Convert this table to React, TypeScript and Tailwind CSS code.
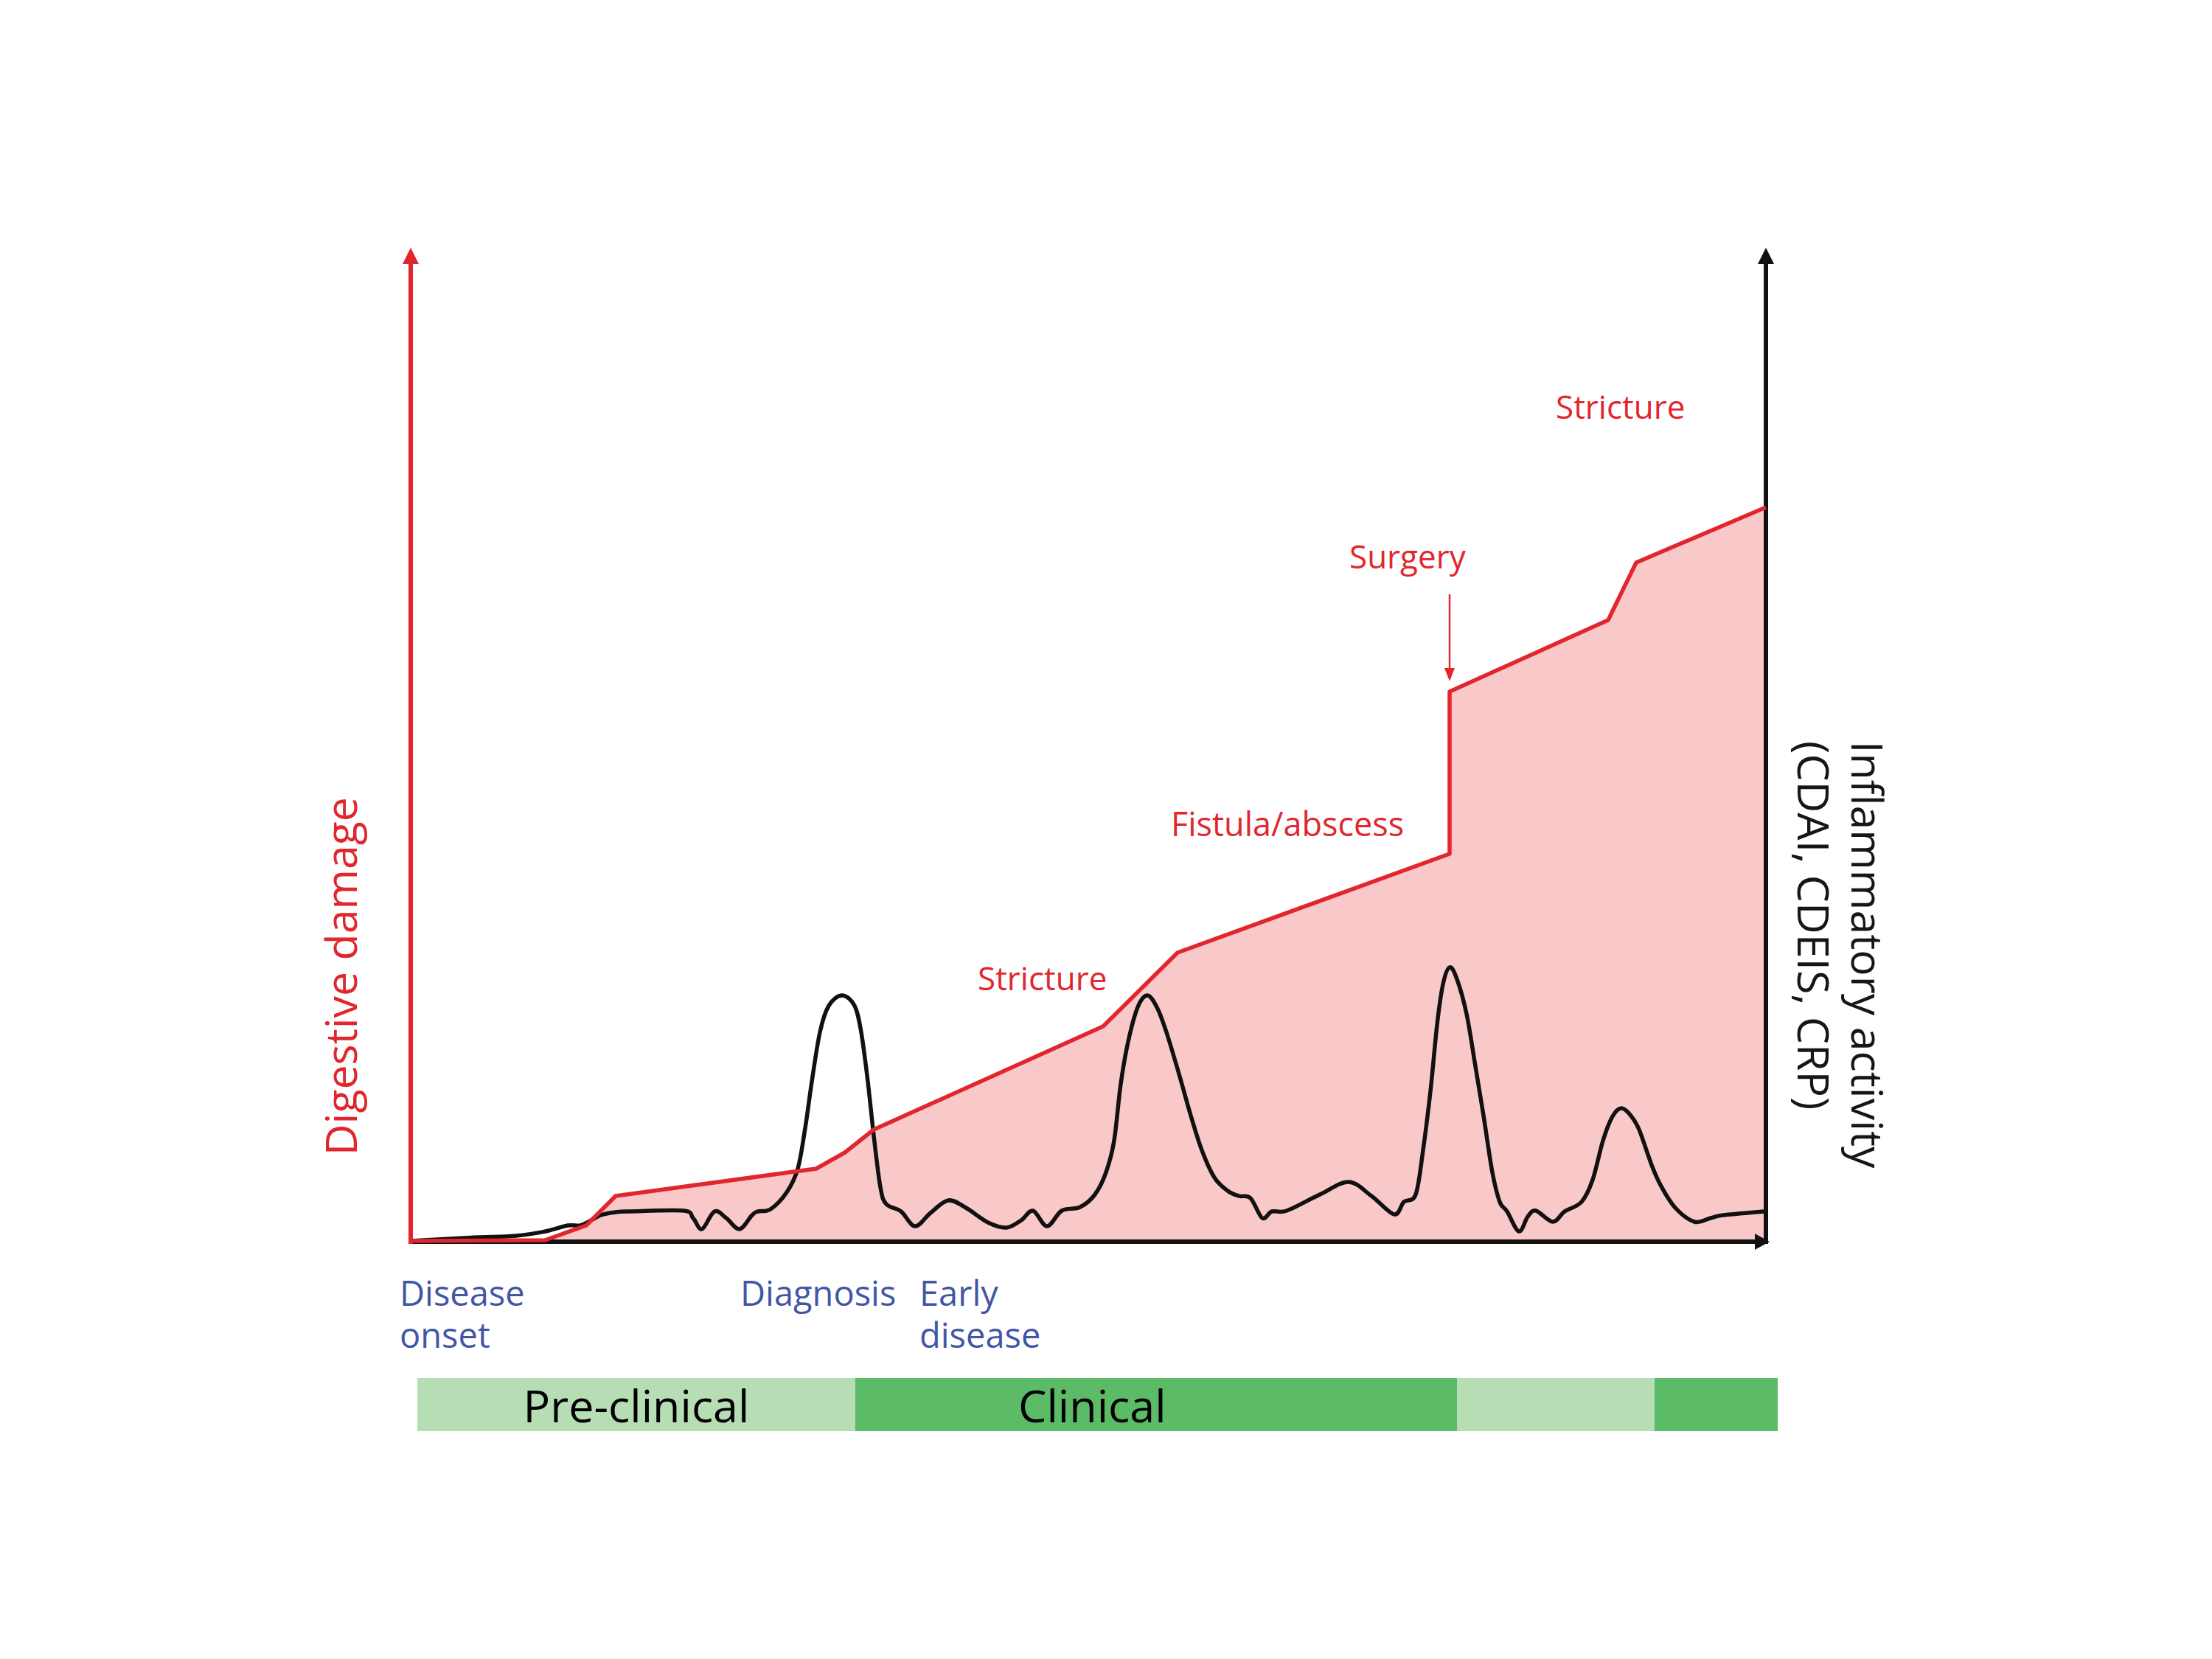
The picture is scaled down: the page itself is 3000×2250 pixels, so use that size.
const damage: [number, number][] = [
  [557, 1683],
  [739, 1682],
  [795, 1662],
  [835, 1622],
  [1107, 1585],
  [1146, 1563],
  [1185, 1532],
  [1496, 1392],
  [1597, 1292],
  [1966, 1158],
  [1966, 938],
  [2181, 841],
  [2219, 763],
  [2395, 688],
];

const activity: [number, number][] = [
  [557, 1683], [630, 1679], [700, 1676], [740, 1670], [770, 1662], [787, 1662],
  [800, 1656], [815, 1648], [835, 1644], [854, 1643], [927, 1642], [940, 1652],
  [952, 1667], [969, 1643], [985, 1652], [1003, 1667], [1020, 1648], [1028, 1643],
  [1045, 1640], [1067, 1617], [1082, 1585], [1092, 1530], [1101, 1467], [1112, 1400],
  [1124, 1364], [1142, 1350], [1159, 1364], [1168, 1400], [1177, 1467], [1185, 1540],
  [1194, 1610], [1202, 1633], [1222, 1643],
  [1241, 1663], [1262, 1645], [1286, 1628], [1310, 1638], [1340, 1658], [1365, 1665],
  [1385, 1655], [1401, 1642], [1420, 1663], [1440, 1642], [1465, 1637], [1485, 1620],
  [1500, 1590], [1511, 1547], [1520, 1470], [1530, 1413], [1543, 1366], [1556, 1350],
  [1569, 1366], [1582, 1400], [1600, 1460], [1615, 1513], [1630, 1560], [1647, 1597],
  [1665, 1615], [1680, 1622], [1696, 1625], [1712, 1652], [1725, 1643], [1745, 1642],
  [1790, 1620], [1829, 1603], [1860, 1622], [1891, 1647], [1904, 1630], [1920, 1620],
  [1930, 1560], [1940, 1480], [1949, 1390], [1957, 1335], [1966, 1312], [1976, 1328],
  [1989, 1375], [2000, 1440], [2012, 1513], [2024, 1590], [2034, 1630], [2044, 1643],
  [2060, 1670], [2072, 1650], [2083, 1642], [2106, 1657], [2122, 1643], [2145, 1630],
  [2160, 1600], [2174, 1547], [2187, 1514], [2199, 1503], [2211, 1512], [2223, 1532],
  [2240, 1580], [2252, 1607], [2272, 1638], [2298, 1657], [2320, 1652], [2337, 1648],
  [2392, 1643],
];

// catmull-rom through the points, as cubic beziers
function smooth(pts: [number, number][]) {
  let d = `M${pts[0][0]} ${pts[0][1]}`;
  for (let i = 0; i < pts.length - 1; i++) {
    const p0 = pts[i - 1] ?? pts[i];
    const p1 = pts[i];
    const p2 = pts[i + 1];
    const p3 = pts[i + 2] ?? p2;
    const c1x = p1[0] + (p2[0] - p0[0]) / 6;
    const c1y = p1[1] + (p2[1] - p0[1]) / 6;
    const c2x = p2[0] - (p3[0] - p1[0]) / 6;
    const c2y = p2[1] - (p3[1] - p1[1]) / 6;
    d += ` C${c1x.toFixed(1)} ${c1y.toFixed(1)} ${c2x.toFixed(1)} ${c2y.toFixed(1)} ${p2[0]} ${p2[1]}`;
  }
  return d;
}

const RED = "#e1262d";

const Chart = () => {
  const line = damage.map((p) => p.join(",")).join(" ");
  const fill = `${line} 2395,1684 740,1684`;

  return (
    <svg width={1920} height={1380} viewBox="500 320 1920 1380" className="shrink-0">
      <polygon points={fill} fill="#f9c9ca" />

      {/* axes */}
      <line x1={557} y1={1684} x2={2384} y2={1684} stroke="#111" strokeWidth={6} />
      <polygon points="2400,1684 2380,1673 2380,1695" fill="#111" />
      <line x1={2395} y1={1687} x2={2395} y2={352} stroke="#111" strokeWidth={6} />
      <polygon points="2395,336 2384,358 2406,358" fill="#111" />

      <path d={smooth(activity)} fill="none" stroke="#111" strokeWidth={5.5} strokeLinejoin="round" />

      <polyline points={line} fill="none" stroke={RED} strokeWidth={5.5} strokeLinejoin="round" />
      <line x1={557} y1={1687} x2={557} y2={352} stroke={RED} strokeWidth={6} />
      <polygon points="557,336 546,358 568,358" fill={RED} />

      {/* surgery marker */}
      <line x1={1966} y1={806} x2={1966} y2={912} stroke={RED} strokeWidth={2.5} />
      <polygon points="1966,924 1959,906 1973,906" fill={RED} />

      <g fill={RED} fontSize={44}>
        <text x={2110} y={568}>Stricture</text>
        <text x={1830} y={771}>Surgery</text>
        <text x={1588} y={1134} fontSize={45}>Fistula/abscess</text>
        <text x={1326} y={1343}>Stricture</text>
      </g>
    </svg>
  );
};

export default function App() {
  return (
    <div className="w-[3000px] h-[2250px] bg-white pt-[320px] font-['Open_Sans',sans-serif]">
      <div className="flex">
        <div className="w-[500px] shrink-0 flex flex-col items-end pr-[3px]">
          <div className="mt-[761px] [writing-mode:vertical-rl] rotate-180 text-[59px] leading-[72px] text-[#e1262d] whitespace-nowrap">
            Digestive damage
          </div>
        </div>
        <Chart />
        <div className="mt-[685px] ml-[4px] [writing-mode:vertical-rl] text-[59px] leading-[73px] text-[#161616] whitespace-nowrap">
          <div>Inflammatory activity</div>
          <div>(CDAI, CDEIS, CRP)</div>
        </div>
      </div>

      <div className="flex mt-[25px] text-[47px] leading-[57px] text-[#4256a6]">
        <div className="w-[1004px] pl-[542px]">
          Disease
          <br />
          onset
        </div>
        <div className="w-[243px]">Diagnosis</div>
        <div>
          Early
          <br />
          disease
        </div>
      </div>

      <div className="flex ml-[566px] mt-[30px] h-[72px] w-[1845px] text-[61px] leading-none text-black">
        <div className="w-[594px] bg-[#b7ddb5] flex items-center justify-center">Pre-clinical</div>
        <div className="w-[816px] bg-[#5bbb66] flex items-center pl-[221px]">Clinical</div>
        <div className="w-[268px] bg-[#b7ddb5]" />
        <div className="w-[167px] bg-[#5bbb66]" />
      </div>
    </div>
  );
}
